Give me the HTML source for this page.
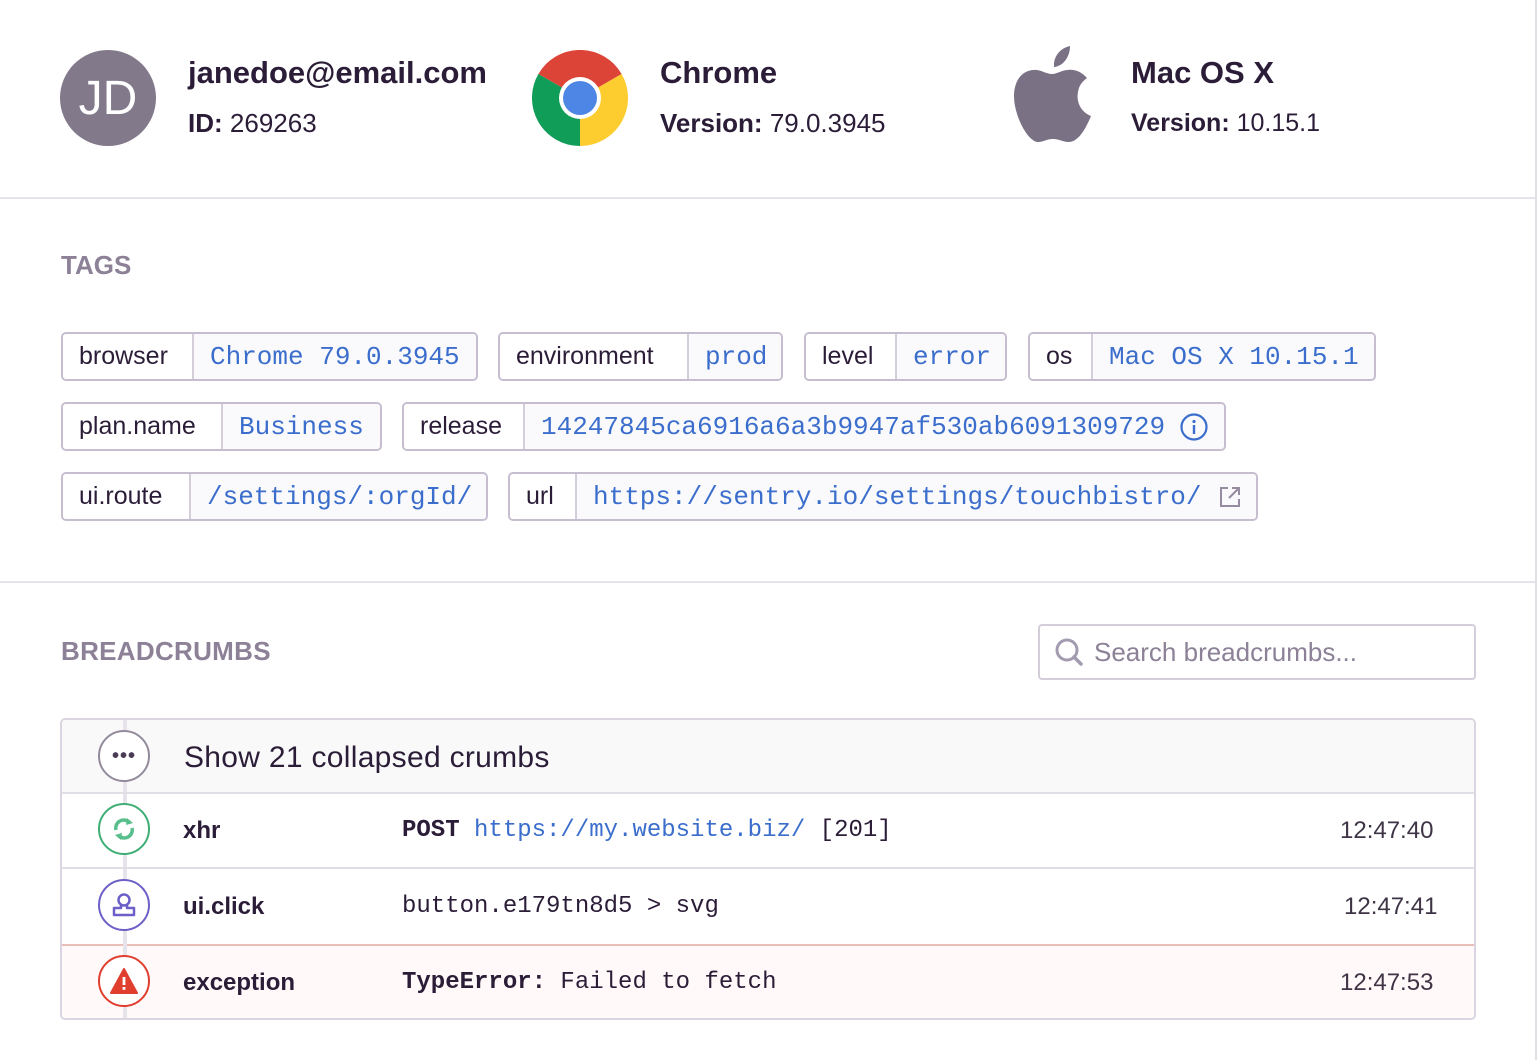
<!DOCTYPE html>
<html><head><meta charset="utf-8"><style>
*{box-sizing:border-box;margin:0;padding:0}
body{width:1537px;height:1060px;background:#fff;font-family:"Liberation Sans",sans-serif;color:#2b1d38;position:relative;overflow:hidden}
.a{position:absolute}
.mono{font-family:"Liberation Mono",monospace}
.tag{position:absolute;height:49px;border:2px solid #c6bed0;border-radius:5px;display:flex;overflow:hidden;font-size:25px}
.tag .k{display:flex;align-items:center;padding-left:16px;background:#fff;border-right:2px solid #d4cedb}
.tag .v{display:flex;align-items:center;padding-left:16px;background:#fafafc;color:#3b6ecc;font-family:"Liberation Mono",monospace;font-size:26px;flex:1}
.h{font-size:26px;font-weight:bold;color:#8c8197}
.ic{position:absolute;left:36px;width:52px;height:52px;border-radius:50%;border:2px solid;background:#fff;display:flex;align-items:center;justify-content:center}
</style></head><body>
<div class="a" style="left:1535px;top:0;width:2px;height:1060px;background:#e2dee6"></div>
<div class="a" style="left:0;top:197px;width:1535px;height:2px;background:#e6e3ea"></div>
<div class="a" style="left:0;top:581px;width:1535px;height:2px;background:#e6e3ea"></div>

<div class="a" style="left:60px;top:50px;width:96px;height:96px;border-radius:50%;background:#82798b;color:#fff;font-size:48px;display:flex;align-items:center;justify-content:center">JD</div>
<div class="a" style="left:188px;top:55px;font-size:31px;font-weight:bold">janedoe@email.com</div>
<div class="a" style="left:188px;top:108px;font-size:26px"><b>ID:</b> 269263</div>

<svg class="a" style="left:532px;top:50px" width="96" height="96" viewBox="-48 -48 96 96">
<path d="M0 0 L-41.6 -24 A48 48 0 0 1 41.6 -24 Z" fill="#db4437"/>
<path d="M0 0 L41.6 -24 A48 48 0 0 1 0 48 Z" fill="#fdcd2f"/>
<path d="M0 0 L0 48 A48 48 0 0 1 -41.6 -24 Z" fill="#0f9d58"/>
<circle r="21" fill="#fff"/><circle r="17" fill="#4e86e6"/></svg>
<div class="a" style="left:660px;top:55px;font-size:31px;font-weight:bold">Chrome</div>
<div class="a" style="left:660px;top:108px;font-size:26px"><b>Version:</b> 79.0.3945</div>

<svg class="a" style="left:1012px;top:44px" width="82" height="100" viewBox="0 0 82 100">
<path d="M58 2 C58 12 52 22 42 23 C41 13 48 4 58 2 Z" fill="#7a7185"/>
<path d="M40 30 C34 30 28 25 21 26 C9 27 2 38 2 52 C2 72 16 98 26 98 C32 98 34 95 41 95 C48 95 50 98 57 98 C67 98 75 82 79 72 C69 68 64 58 66 48 C67 41 71 37 75 34 C69 27 61 25 56 26 C50 26 45 30 40 30 Z" fill="#7a7185"/></svg>
<div class="a" style="left:1131px;top:55px;font-size:31px;font-weight:bold">Mac OS X</div>
<div class="a" style="left:1131px;top:109px;font-size:25px"><b>Version:</b> 10.15.1</div>

<div class="a h" style="left:61px;top:250px">TAGS</div>

<div class="tag" style="left:61px;top:332px;width:417px"><div class="k" style="width:131px">browser</div><div class="v">Chrome 79.0.3945</div></div>
<div class="tag" style="left:498px;top:332px;width:285px"><div class="k" style="width:189px">environment</div><div class="v">prod</div></div>
<div class="tag" style="left:804px;top:332px;width:203px"><div class="k" style="width:91px">level</div><div class="v">error</div></div>
<div class="tag" style="left:1028px;top:332px;width:348px"><div class="k" style="width:63px">os</div><div class="v">Mac OS X 10.15.1</div></div>

<div class="tag" style="left:61px;top:402px;width:321px"><div class="k" style="width:160px">plan.name</div><div class="v">Business</div></div>
<div class="tag" style="left:402px;top:402px;width:824px"><div class="k" style="width:121px">release</div><div class="v">14247845ca6916a6a3b9947af530ab6091309729<svg style="margin-left:14px" width="30" height="30" viewBox="0 0 30 30"><circle cx="15" cy="15" r="12.5" fill="none" stroke="#3b6ecc" stroke-width="2.2"/><circle cx="15" cy="9.5" r="1.6" fill="#3b6ecc"/><rect x="13.8" y="13" width="2.4" height="9" fill="#3b6ecc"/></svg></div></div>

<div class="tag" style="left:61px;top:472px;width:427px"><div class="k" style="width:128px">ui.route</div><div class="v">/settings/:orgId/</div></div>
<div class="tag" style="left:508px;top:472px;width:750px"><div class="k" style="width:67px">url</div><div class="v">https://sentry.io/settings/touchbistro/<svg style="margin-left:16px" width="24" height="24" viewBox="0 0 24 24"><path d="M10 3H3v18h18v-7" fill="none" stroke="#968ba0" stroke-width="2"/><path d="M14 3h7v7M21 3L11 13" fill="none" stroke="#968ba0" stroke-width="2"/></svg></div></div>

<div class="a h" style="left:61px;top:636px;letter-spacing:0.3px">BREADCRUMBS</div>
<div class="a" style="left:1038px;top:624px;width:438px;height:56px;border:2px solid #d4cedb;border-radius:4px;display:flex;align-items:center;padding-left:14px;font-size:26px;color:#8c8197">
<svg width="30" height="30" viewBox="0 0 30 30" style="margin-right:10px"><circle cx="13" cy="13" r="10" fill="none" stroke="#a39bb0" stroke-width="3"/><path d="M20 20l7 7" stroke="#a39bb0" stroke-width="3.5" stroke-linecap="round"/></svg>Search breadcrumbs...</div>

<div class="a" style="left:60px;top:718px;width:1416px;height:302px;border:2px solid #dad5e0;border-radius:5px;overflow:hidden">
<div class="a" style="left:0;top:0;width:1414px;height:72px;background:#f9f9fa"></div>
<div class="a" style="left:-2px;top:224px;width:1416px;height:78px;background:#fffaf9;border:2px solid #e8bfb9;border-radius:0 0 5px 5px"></div>
<div class="a" style="left:61px;top:0;width:4px;height:300px;background:#e6e3ea"></div>
<div class="a" style="left:122px;top:21px;font-size:30px;letter-spacing:0.3px;color:#2b1d38">Show 21 collapsed crumbs</div>
<div class="ic" style="top:10px;border-color:#938b9d;font-size:20px;color:#4a3e56;font-weight:bold;letter-spacing:1px">•••</div>

<div class="a" style="left:0;top:72px;width:1414px;height:2px;background:#e2dee6"></div>
<div class="ic" style="top:83px;border-color:#3fae76"><svg width="28" height="28" viewBox="0 0 28 28"><path d="M6 15 A8 8 0 0 1 19 7" fill="none" stroke="#57be8c" stroke-width="3.5"/><path d="M22 13 A8 8 0 0 1 9 21" fill="none" stroke="#57be8c" stroke-width="3.5"/><path d="M17 3l6 5-7 2z M11 25l-6-5 7-2z" fill="#57be8c"/></svg></div>
<div class="a" style="left:121px;top:97px;font-size:24px;font-weight:bold">xhr</div>
<div class="a mono" style="left:340px;top:97px;font-size:24px"><b>POST</b> <span style="color:#3b6ecc">https://my.website.biz/</span> [201]</div>
<div class="a" style="left:1278px;top:97px;font-size:24px;color:#3e3446">12:47:40</div>

<div class="a" style="left:0;top:147px;width:1414px;height:2px;background:#e2dee6"></div>
<div class="ic" style="top:159px;border-color:#6c5fc7"><svg width="30" height="30" viewBox="0 0 30 30"><circle cx="15" cy="10" r="5.5" fill="none" stroke="#6c5fc7" stroke-width="2.5"/><path d="M12 15v3H5v7h20v-7h-7v-3" fill="none" stroke="#6c5fc7" stroke-width="2.5" stroke-linejoin="round"/></svg></div>
<div class="a" style="left:121px;top:173px;font-size:24px;font-weight:bold">ui.click</div>
<div class="a mono" style="left:340px;top:173px;font-size:24px">button.e179tn8d5 &gt; svg</div>
<div class="a" style="left:1282px;top:173px;font-size:24px;color:#3e3446">12:47:41</div>

<div class="ic" style="top:235px;border-color:#e03e2f"><svg width="30" height="28" viewBox="0 0 30 28"><path d="M15 2L28 26H2z" fill="#e03e2f" stroke="#e03e2f" stroke-width="2" stroke-linejoin="round"/><rect x="13.6" y="10" width="2.8" height="8" fill="#fff"/><rect x="13.6" y="20" width="2.8" height="2.8" fill="#fff"/></svg></div>
<div class="a" style="left:121px;top:249px;font-size:24px;font-weight:bold">exception</div>
<div class="a mono" style="left:340px;top:249px;font-size:24px"><b>TypeError:</b> Failed to fetch</div>
<div class="a" style="left:1278px;top:249px;font-size:24px;color:#3e3446">12:47:53</div>
</div>
</body></html>
